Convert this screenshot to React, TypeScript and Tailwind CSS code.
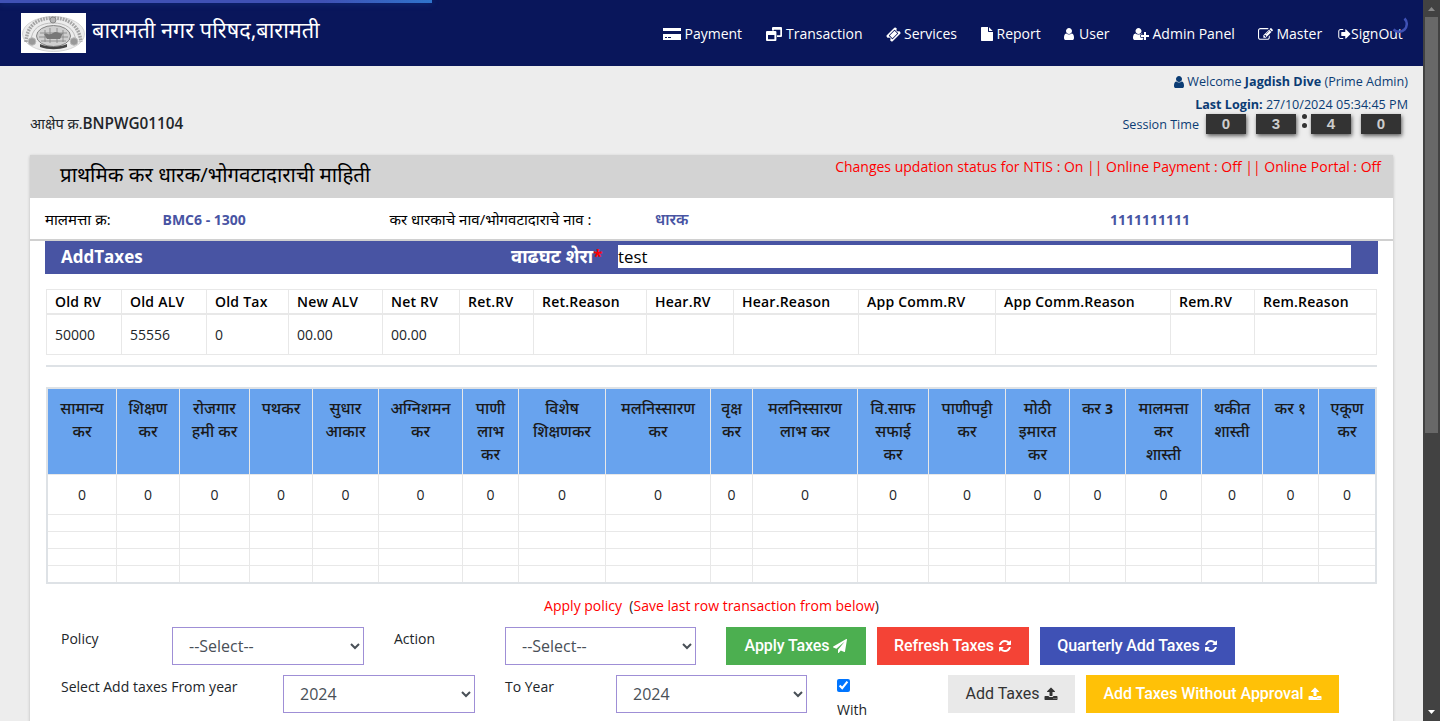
import type { ReactNode } from "react";

const ICONS = {
  user: "M1536 1399q0 109-62.5 187t-150.5 78h-854q-88 0-150.5-78t-62.5-187q0-85 8.5-160.5t31.5-152 58.5-131 94-89 134.5-34.5q131 128 313 128t313-128q76 0 134.5 34.5t94 89 58.5 131 31.5 152 8.5 160.5zm-256-887q0 159-112.5 271.5t-271.5 112.5-271.5-112.5-112.5-271.5 112.5-271.5 271.5-112.5 271.5 112.5 112.5 271.5z",
  edit: "M888 1184l116-116-152-152-116 116v56h96v96h56zm440-720q-16-16-33 1l-350 350q-17 17-1 33t33-1l350-350q17-17 1-33zm80 594v190q0 119-84.5 203.5t-203.5 84.5h-832q-119 0-203.5-84.5t-84.5-203.5v-832q0-119 84.5-203.5t203.5-84.5h832q63 0 117 25 15 7 18 23 3 17-9 29l-49 49q-14 14-32 8-23-6-45-6h-832q-66 0-113 47t-47 113v832q0 66 47 113t113 47h832q66 0 113-47t47-113v-126q0-13 9-22l64-64q15-15 35-7t20 29zm-96-738l288 288-672 672h-288v-288zm444 132l-92 92-288-288 92-92q28-28 68-28t68 28l152 152q28 28 28 68t-28 68z",
  signOut: "M704 1440q0 4 1 20t.5 26.5-3 23.5-10 19.5-20.5 6.5h-320q-119 0-203.5-84.5t-84.5-203.5v-704q0-119 84.5-203.5t203.5-84.5h320q13 0 22.5 9.5t9.5 22.5q0 4 1 20t.5 26.5-3 23.5-10 19.5-20.5 6.5h-320q-66 0-113 47t-47 113v704q0 66 47 113t113 47h312l11.5 1 11.5 3 8 5.5 7 9 2 13.5zm928-544q0 26-19 45l-544 544q-19 19-45 19t-45-19-19-45v-288h-448q-26 0-45-19t-19-45v-384q0-26 19-45t45-19h448v-288q0-26 19-45t45-19 45 19l544 544q19 19 19 45z",
  refresh: "M1639 1056q0 5-1 7-64 268-268 434.5t-478 166.5q-146 0-282.5-55t-243.5-157l-129 129q-19 19-45 19t-45-19-19-45v-448q0-26 19-45t45-19h448q26 0 45 19t19 45-19 45l-137 137q71 66 161 102t187 36q134 0 250-65t186-179q11-17 53-117 8-23 30-23h192q13 0 22.5 9.5t9.5 22.5zm25-800v448q0 26-19 45t-45 19h-448q-26 0-45-19t-19-45 19-45l138-138q-148-137-349-137-134 0-250 65t-186 179q-11 17-53 117-8 23-30 23h-199q-13 0-22.5-9.5t-9.5-22.5v-7q65-268 270-434.5t480-166.5q146 0 284 55.5t245 156.5l130-129q19-19 45-19t45 19 19 45z",
  plane: "M1764 11q33 24 27 64l-256 1536q-5 29-32 45-14 8-31 8-11 0-24-5l-453-185-242 295q-18 23-49 23-13 0-22-4-19-7-30.5-23.5t-11.5-36.5v-349l864-1059-1069 925-395-162q-37-14-40-55-2-40 32-59l1664-960q15-9 32-9 20 0 36 11z",
  upload: "M1344 1472q0-26-19-45t-45-19-45 19-19 45 19 45 45 19 45-19 19-45zm256 0q0-26-19-45t-45-19-45 19-19 45 19 45 45 19 45-19 19-45zm128-224v320q0 40-28 68t-68 28h-1472q-40 0-68-28t-28-68v-320q0-40 28-68t68-28h427q21 56 70.5 92t110.5 36h256q61 0 110.5-36t70.5-92h427q40 0 68 28t28 68zm-325-648q-17 40-59 40h-256v448q0 26-19 45t-45 19h-256q-26 0-45-19t-19-45v-448h-256q-42 0-59-40-17-39 14-69l448-448q18-19 45-19t45 19l448 448q31 30 14 69z",
  userPlus: "M704 896q-159 0-271.5-112.5t-112.5-271.5 112.5-271.5 271.5-112.5 271.5 112.5 112.5 271.5-112.5 271.5-271.5 112.5zm960 128h352q13 0 22.5 9.5t9.5 22.5v192q0 13-9.5 22.5t-22.5 9.5h-352v352q0 13-9.5 22.5t-22.5 9.5h-192q-13 0-22.5-9.5t-9.5-22.5v-352h-352q-13 0-22.5-9.5t-9.5-22.5v-192q0-13 9.5-22.5t22.5-9.5h352v-352q0-13 9.5-22.5t22.5-9.5h192q13 0 22.5 9.5t9.5 22.5v352zm-736 224q0 52 38 90t90 38h256v238q-68 50-171 50h-874q-121 0-194-69t-73-190q0-53 3.5-103.5t14-109 26.5-108.5 43-97.5 62-81 85.5-53.5 111.5-20q19 0 39 17 79 61 154.5 91.5t164.5 30.5 164.5-30.5 154.5-91.5q20-17 39-17 132 0 217 96h-223q-52 0-90 38t-38 90v192z",
  ticket: "M1024 452l316 316-572 572-316-316zm-211 979l618-618q19-19 19-45t-19-45l-362-362q-18-18-45-18t-45 18l-618 618q-19 19-19 45t19 45l362 362q18 18 45 18t45-18zm889-637l-907 908q-37 37-90.5 37t-90.5-37l-126-126q56-56 56-136t-56-136-136-56-136 56l-125-126q-37-37-37-90.5t37-90.5l907-906q37-37 90.5-37t90.5 37l125 125q-56 56-56 136t56 136 136 56 136-56l126 125q37 37 37 90.5t-37 90.5z",
  file: "M1152 512v-472q22 14 36 28l408 408q14 14 28 36h-472zm-128 32q0 40 28 68t68 28h544v1056q0 40-28 68t-68 28h-1344q-40 0-68-28t-28-68v-1600q0-40 28-68t68-28h800v544z",
};

function Icon({ name, box = "0 0 1792 1792", className }: { name: keyof typeof ICONS; box?: string; className: string }) {
  return (
    <svg viewBox={box} fill="currentColor" className={`shrink-0 ${className}`}>
      <path d={ICONS[name]} />
    </svg>
  );
}

function CardIcon() {
  return (
    <svg viewBox="0 0 18 12" className="h-3 w-[18px] shrink-0" fill="currentColor" shapeRendering="crispEdges">
      <path fillRule="evenodd" d="M0 0h18v3H0zM0 6h18v6H0zM2 9v1h2V9zM5 9v1h3V9z" />
    </svg>
  );
}

function WindowsIcon() {
  return (
    <svg viewBox="0 0 16 14" className="h-3.5 w-4 shrink-0" fill="currentColor">
      <path fillRule="evenodd" d="M7 0h8a1 1 0 0 1 1 1v8a1 1 0 0 1-1 1h-4V8.300h3.300V2.700H8V3.500H6V1a1 1 0 0 1 1-1z" />
      <path fillRule="evenodd" d="M1 4h8.400a1 1 0 0 1 1 1v8a1 1 0 0 1-1 1H1a1 1 0 0 1-1-1V5a1 1 0 0 1 1-1zm1 4v4.300h6.400V8z" />
    </svg>
  );
}

function Emblem() {
  return (
    <svg viewBox="0 0 65 40" className="h-10 w-[65px] shrink-0 bg-white">
      <ellipse cx="32.500" cy="21" rx="31" ry="17.500" fill="#ececec" stroke="#c4c4c4" strokeWidth=".7" />
      <path d="M5 29C6 11 18 5 32 5s26 6 28 24" fill="none" stroke="#a4a4a4" strokeWidth="3.500" strokeDasharray="1.800 1" />
      <path d="M10 29C10 15 20 10 32 10s22 5 23 19" fill="none" stroke="#bdbdbd" strokeWidth="1" />
      <ellipse cx="32.500" cy="23" rx="17" ry="10.500" fill="#cfcfcf" stroke="#858585" strokeWidth="1" />
      <path d="M19 20h27M18 24h29M20 28h25M24 17v12M29 15v15M36 15v15M42 17v12" stroke="#8b8b8b" strokeWidth=".9" />
      <path d="M23 21c3-2 5 2 9-1s7 2 10 0l-3 6H26z" fill="#777" />
      <path d="M19 31c9 3.500 18 3.500 27 0v3c-9 3-18 3-27 0z" fill="#444" />
      <circle cx="11" cy="28.500" r="3.800" fill="#999" stroke="#bbb" />
      <circle cx="53" cy="28.500" r="3.800" fill="#999" stroke="#bbb" />
      <circle cx="32" cy="7" r="3" fill="#b5b5b5" stroke="#888" />
    </svg>
  );
}

function NavItem({ width, gap = "gap-[3px]", icon, label }: { width: string; gap?: string; icon: ReactNode; label: string }) {
  return (
    <a className={`flex shrink-0 items-center whitespace-nowrap ${width} ${gap}`}>
      {icon}
      <span>{label}</span>
    </a>
  );
}

function Digit({ children, className = "" }: { children: ReactNode; className?: string }) {
  return (
    <span className={`flex h-5 w-10 items-center justify-center bg-[#333] font-['Liberation_Sans',sans-serif] text-[15px] font-bold text-[#ccc] shadow-[1px_2px_4px_rgba(0,0,0,0.6)] ${className}`}>
      {children}
    </span>
  );
}

const RV_COLS: [string, string, string][] = [
  ["Old RV", "w-[75px]", "50000"],
  ["Old ALV", "w-[85px]", "55556"],
  ["Old Tax", "w-[82px]", "0"],
  ["New ALV", "w-[94px]", "00.00"],
  ["Net RV", "w-[77px]", "00.00"],
  ["Ret.RV", "w-[74px]", ""],
  ["Ret.Reason", "w-[113px]", ""],
  ["Hear.RV", "w-[87px]", ""],
  ["Hear.Reason", "w-[125px]", ""],
  ["App Comm.RV", "w-[137px]", ""],
  ["App Comm.Reason", "w-[175px]", ""],
  ["Rem.RV", "w-[84px]", ""],
  ["Rem.Reason", "w-[122px]", ""],
];

const TAX_COLS: [ReactNode[], string][] = [
  [["सामान्य", "कर"], "w-[69px]"],
  [["शिक्षण", "कर"], "w-[63px]"],
  [["रोजगार", "हमी कर"], "w-[70px]"],
  [["पथकर"], "w-[63px]"],
  [["सुधार", "आकार"], "w-[66px]"],
  [["अग्निशमन", "कर"], "w-[84px]"],
  [["पाणी", "लाभ", "कर"], "w-[56px]"],
  [["विशेष", "शिक्षणकर"], "w-[87px]"],
  [["मलनिस्सारण", "कर"], "w-[105px]"],
  [["वृक्ष", "कर"], "w-[42px]"],
  [["मलनिस्सारण", "लाभ कर"], "w-[105px]"],
  [["वि.साफ", "सफाई", "कर"], "w-[71px]"],
  [["पाणीपट्टी", "कर"], "w-[77px]"],
  [["मोठी", "इमारत", "कर"], "w-[64px]"],
  [[<>कर <span className="text-sm font-bold leading-none">3</span></>], "w-[56px]"],
  [["मालमत्ता", "कर", "शास्ती"], "w-[76px]"],
  [["थकीत", "शास्ती"], "w-[61px]"],
  [["कर १"], "w-[56px]"],
  [["एकूण", "कर"], "w-[56px]"],
];

function Select({ value, width }: { value: string; width: string }) {
  return (
    <select className={`h-[38px] shrink-0 border border-[#9f8fd6] bg-white px-3 text-base text-[#495057] ${width}`} defaultValue={value}>
      <option>{value}</option>
    </select>
  );
}

function Button({ label, icon, className }: { label: string; icon: keyof typeof ICONS; className: string }) {
  return (
    <button className={`flex h-[38px] shrink-0 items-center justify-center gap-1 whitespace-nowrap font-['Roboto',sans-serif] text-base ${className}`}>
      {label}
      <Icon name={icon} className="size-3.5" />
    </button>
  );
}

export default function App() {
  return (
    <div className="relative flex h-[721px] w-[1440px] overflow-hidden bg-[#ededed] font-['Open_Sans','Noto_Sans_Devanagari','Noto_Sans',sans-serif] text-sm text-[#212529]">
      <div className="w-[1423px] shrink-0">
        <header className="flex h-[66px] bg-[#09165b] pl-[21px] text-white">
          <div className="flex w-[642px] shrink-0 gap-1.5 pt-[13px]">
            <Emblem />
            <h1 className="mt-px whitespace-nowrap text-[21.7px] leading-8">बारामती नगर परिषद,बारामती</h1>
          </div>
          <nav className="flex pt-[2px]">
            <NavItem width="w-[103px]" gap="gap-[3.5px]" icon={<CardIcon />} label="Payment" />
            <NavItem width="w-[120px]" gap="gap-1" icon={<WindowsIcon />} label="Transaction" />
            <NavItem width="w-[95px]" icon={<Icon name="ticket" className="size-[15px]" />} label="Services" />
            <NavItem width="w-[83px]" gap="gap-[3.5px]" icon={<Icon name="file" box="128 0 1536 1792" className="h-3.5 w-3" />} label="Report" />
            <NavItem width="w-[69px]" gap="gap-[5px]" icon={<Icon name="user" box="256 0 1280 1792" className="h-3.5 w-2.5" />} label="User" />
            <NavItem width="w-[125px]" gap="gap-[3.5px]" icon={<Icon name="userPlus" box="0 0 2048 1792" className="h-3.5 w-4" />} label="Admin Panel" />
            <NavItem width="w-[80px]" gap="gap-[3.5px]" icon={<Icon name="edit" className="size-[15px]" />} label="Master" />
            <NavItem width="w-[66px]" gap="gap-0" icon={<Icon name="signOut" box="64 0 1600 1792" className="h-3.5 w-[13px]" />} label="SignOut" />
          </nav>
        </header>

        <div className="flex h-[89px] justify-between pl-[30px] pr-[15px]">
          <p className="pt-[47px] text-[14.6px] leading-[21px]">
            आक्षेप क्र.<b className="text-[15.3px] font-semibold leading-none">BNPWG01104</b>
          </p>
          <div className="flex flex-col items-end text-[12.6px] text-[#0b3c74]">
            <p className="mt-1 flex h-[23px] items-center gap-[3px]">
              <Icon name="user" box="256 0 1280 1792" className="h-3.5 w-2.5" />
              <span>
                Welcome <b>Jagdish Dive</b> (Prime Admin)
              </span>
            </p>
            <p className="h-5 leading-[23px]">
              <b>Last Login:</b> 27/10/2024 05:34:45 PM
            </p>
            <div className="flex h-[22px] items-center pr-[7px]">
              <span className="mr-[7px] pt-0.5">Session Time</span>
              <Digit>0</Digit>
              <Digit className="ml-2.5">3</Digit>
              <span className="flex w-[15px] flex-col items-center gap-1 pb-1.5 pl-px">
                <i className="size-[5px] rounded-full bg-[#333]" />
                <i className="size-[5px] rounded-full bg-[#333]" />
              </span>
              <Digit>4</Digit>
              <Digit className="ml-2.5">0</Digit>
            </div>
          </div>
        </div>

        <main className="ml-[30px] w-[1363px] bg-white shadow-[0_1px_3px_rgba(0,0,0,0.22)]">
          <div className="flex h-[43px] justify-between bg-[#d3d3d3] pl-[30px] pr-3 text-black">
            <h2 className="text-[20.5px] leading-[38px]">प्राथमिक कर धारक/भोगवटादाराची माहिती</h2>
            <p className="pt-px leading-[21px] text-[#f00]">Changes updation status for NTIS : On || Online Payment : Off || Online Portal : Off</p>
          </div>
          <div className="flex h-[43px] border-b-2 border-[#d0d0d0] pl-[15px] leading-[43px] text-black">
            <span className="w-[117.500px] whitespace-nowrap text-[15px]">मालमत्ता क्र:</span>
            <b className="w-[227px] text-[#4854a3]">BMC6 - 1300</b>
            <span className="w-[265.500px] whitespace-nowrap text-[15px]">कर धारकाचे नाव/भोगवटादाराचे नाव :</span>
            <b className="w-[455px] text-[15.4px] font-semibold text-[#4854a3]">धारक</b>
            <b className="text-[#4854a3]">1111111111</b>
          </div>

          <div className="mx-[15px] flex h-[33px] bg-[#4854a3] pl-4 text-[17px] font-bold leading-8 text-white">
            <span className="w-[450px]">AddTaxes</span>
            <span className="w-[107px] whitespace-nowrap text-[18.5px] leading-[30px]">
              वाढघट शेरा<span className="text-[17px] leading-none text-[#f00]">*</span>
            </span>
            <input className="mt-1 h-[23px] w-[733px] bg-white text-[16.8px] font-normal text-black" defaultValue="test" />
          </div>

          <div className="mx-4 mt-[15px]">
            <table className="w-[1331px] table-fixed border-separate border-spacing-0 border-l border-t border-[#e8e8e8]">
              <colgroup>
                {RV_COLS.map(([label, width]) => (
                  <col key={label} className={width} />
                ))}
              </colgroup>
              <thead>
                <tr className="h-[25px] text-left text-black">
                  {RV_COLS.map(([label]) => (
                    <th key={label} className="whitespace-nowrap border-b-2 border-r border-[#e8e8e8] p-0 pl-2 font-semibold tracking-[0.22px]">
                      {label}
                    </th>
                  ))}
                </tr>
              </thead>
              <tbody>
                <tr className="h-10">
                  {RV_COLS.map(([label, , value]) => (
                    <td key={label} className="border-b border-r border-[#e8e8e8] p-0 pl-2">
                      {value}
                    </td>
                  ))}
                </tr>
              </tbody>
            </table>

            <hr className="mt-2.5 border-t-2 border-[#dee2e6]" />

            <table className="mt-5 w-[1331px] table-fixed border-separate border-spacing-0 border-2 border-[#dee2e6]">
              <colgroup>
                {TAX_COLS.map(([, width], i) => (
                  <col key={i} className={width} />
                ))}
              </colgroup>
              <thead>
                <tr className="h-[86px] bg-[#68a3ee]">
                  {TAX_COLS.map(([lines], i) => (
                    <th key={i} className="border-b border-r border-[#e8e8e8] p-0 pt-2 align-top text-[15.8px] font-medium leading-[23px] text-[#1a1a1a] last:border-r-0">
                      {lines.map((line, n) => (
                        <div key={n} className="-mx-1 whitespace-nowrap">{line}</div>
                      ))}
                    </th>
                  ))}
                </tr>
              </thead>
              <tbody>
                <tr className="h-10 text-center">
                  {TAX_COLS.map((_, i) => (
                    <td key={i} className="border-b border-r border-[#e8e8e8] p-0 last:border-r-0">0</td>
                  ))}
                </tr>
                {["h-[17px]", "h-[17px]", "h-[17px]", "h-[16px]"].map((height, r) => (
                  <tr key={r} className={`group ${height}`}>
                    {TAX_COLS.map((_, i) => (
                      <td key={i} className="border-b border-r border-[#e8e8e8] p-0 last:border-r-0 group-last:border-b-0" />
                    ))}
                  </tr>
                ))}
              </tbody>
            </table>
          </div>

          <p className="mt-[11px] h-8 text-center leading-[21px]">
            <span className="text-[#f00]">Apply policy</span>&nbsp; (<span className="text-[#f00]">Save last row transaction from below</span>)
          </p>
          <div className="flex h-12 pl-[31px] leading-6">
            <label className="w-[111px]">Policy</label>
            <Select value="--Select--" width="w-[192px]" />
            <label className="ml-[30px] w-[111px]">Action</label>
            <Select value="--Select--" width="w-[191px]" />
            <div className="ml-[30px] flex gap-[11px] font-medium tracking-[-0.1px] text-white">
              <Button label="Apply Taxes" icon="plane" className="w-[140px] bg-[#4caf50]" />
              <Button label="Refresh Taxes" icon="refresh" className="w-[152px] bg-[#f44336]" />
              <Button label="Quarterly Add Taxes" icon="refresh" className="w-[195px] bg-[#3f51b5]" />
            </div>
          </div>
          <div className="flex h-12 pl-[31px] leading-6">
            <label className="w-[222px]">Select Add taxes From year</label>
            <Select value="2024" width="w-[192px]" />
            <label className="ml-[30px] w-[111px]">To Year</label>
            <Select value="2024" width="w-[191px]" />
            <label className="ml-[30px] flex w-[111px] flex-col pt-1">
              <input type="checkbox" defaultChecked className="size-[13px]" />
              <span className="mt-1.5">With</span>
            </label>
            <div className="flex gap-[11px]">
              <Button label="Add Taxes" icon="upload" className="w-[127px] bg-[#e9e9e9] text-[#333]" />
              <Button label="Add Taxes Without Approval" icon="upload" className="w-[253px] bg-[#ffc107] font-medium tracking-[-0.05px] text-white" />
            </div>
          </div>
        </main>
      </div>

      <div className="flex w-[17px] shrink-0 flex-col items-center justify-between bg-[#424242]">
        <div className="flex flex-col items-center">
          <svg viewBox="0 0 17 17" className="size-[17px]" fill="#8a8a8a">
            <path d="M5 11h7L8.500 7z" />
          </svg>
          <div className="h-[416px] w-[13px] bg-[#686868]" />
        </div>
        <svg viewBox="0 0 17 17" className="size-[17px]" fill="#fff">
          <path d="M5 6h7L8.500 10z" />
        </svg>
      </div>

      {/* page-load progress bar and spinner */}
      <div className="absolute left-0 top-0 h-[3px] w-[432px] bg-[linear-gradient(90deg,#3f51b5_75%,#2f74cc)] shadow-[0_0_7px_rgba(41,121,220,0.35)]" />
      <svg viewBox="0 0 18 18" className="absolute left-[1390px] top-[15px] size-[18px]" fill="none" stroke="#3f51b5" strokeWidth="2.500">
        <path d="M14.500 3.500A7.500 7.500 0 0 1 3.500 14.500" />
      </svg>
    </div>
  );
}
